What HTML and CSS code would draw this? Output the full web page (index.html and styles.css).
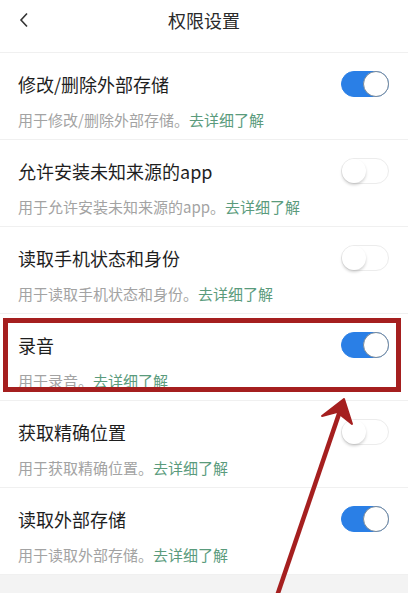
FILE: index.html
```html
<html lang="zh-CN">
<head>
    <meta charset="UTF-8">
    <meta name="viewport" content="width=device-width, initial-scale=1.0">
    <title>权限设置</title>
    <link rel="stylesheet" href="styles.css">
</head>
<body>
    <div class="page">
        <div class="header">
            <span class="back">
                <svg width="10" height="16" viewBox="0 0 10 16"><path d="M8 1.5 L2 8 L8 14.5" fill="none" stroke="#333" stroke-width="1.6"/></svg>
            </span>
            <span class="title">权限设置</span>
            <span></span>
        </div>
        <ul class="permlist">
            <li class="perm">
                <div class="permtop">
                    <span class="permname">修改/删除外部存储</span>
                    <span class="switch on"><span class="knob"></span></span>
                </div>
                <div class="permdesc">用于修改/删除外部存储。<span class="more">去详细了解</span></div>
            </li>
            <li class="perm">
                <div class="permtop">
                    <span class="permname">允许安装未知来源的app</span>
                    <span class="switch"><span class="knob"></span></span>
                </div>
                <div class="permdesc">用于允许安装未知来源的app。<span class="more">去详细了解</span></div>
            </li>
            <li class="perm">
                <div class="permtop">
                    <span class="permname">读取手机状态和身份</span>
                    <span class="switch"><span class="knob"></span></span>
                </div>
                <div class="permdesc">用于读取手机状态和身份。<span class="more">去详细了解</span></div>
            </li>
            <li class="perm">
                <div class="permtop">
                    <span class="permname">录音</span>
                    <span class="switch on"><span class="knob"></span></span>
                </div>
                <div class="permdesc">用于录音。<span class="more">去详细了解</span></div>
            </li>
            <li class="perm">
                <div class="permtop">
                    <span class="permname">获取精确位置</span>
                    <span class="switch"><span class="knob"></span></span>
                </div>
                <div class="permdesc">用于获取精确位置。<span class="more">去详细了解</span></div>
            </li>
            <li class="perm">
                <div class="permtop">
                    <span class="permname">读取外部存储</span>
                    <span class="switch on"><span class="knob"></span></span>
                </div>
                <div class="permdesc">用于读取外部存储。<span class="more">去详细了解</span></div>
            </li>
        </ul>
        <!-- annotation -->
        <div class="highlight"></div>
        <svg class="arrow" width="408" height="593" viewBox="0 0 408 593">
            <line x1="277" y1="596" x2="341" y2="408" stroke="#a51f1f" stroke-width="4.5"/>
            <path d="M344 399 L322 416 L337 412 L352 424 Z" fill="#a51f1f" stroke="#a51f1f" stroke-width="2" stroke-linejoin="round"/>
        </svg>
    </div>
</body>
</html>
```

FILE: styles.css
```css
body {
    margin: 0;
    background-color: #f3f3f3;
    font-family: "Noto Sans CJK SC", "Noto Sans", sans-serif;
}
.page {
    position: relative;
    width: 408px;
    height: 593px;
    overflow: hidden;
}
.header {
    display: grid;
    grid-template-columns: 1fr auto 1fr;
    align-items: start;
    height: 44px;
    padding-top: 8px;
    background-color: white;
    border-bottom: 1px solid #f0f0f0;
}
.back {
    padding-left: 19px;
    padding-top: 4px;
    height: 16px;
}
.title {
    font-size: 18px;
    line-height: 24px;
    color: #2a2a2a;
}
.permlist {
    list-style: none;
    margin: 0;
    padding: 0;
    background-color: white;
}
.perm {
    height: 86px;
    padding: 19px 19px 0 18px;
    box-sizing: border-box;
    height: 87px;
    border-bottom: 1px solid #f0f0f0;
}
.permtop {
    display: flex;
    justify-content: space-between;
    align-items: center;
    height: 24px;
}
.permname {
    font-size: 18px;
    line-height: 24px;
    color: #1e1e1e;
}
.permdesc {
    margin-top: 14px;
    font-size: 15px;
    line-height: 20px;
    color: #a3a3a3;
}
.more {
    color: #5a9b7c;
}
.switch {
    position: relative;
    width: 48px;
    height: 26px;
    border-radius: 13px;
    background-color: white;
    border: 1px solid #ececec;
    box-sizing: border-box;
}
.switch .knob {
    position: absolute;
    left: 0;
    top: 0;
    width: 24px;
    height: 24px;
    border-radius: 50%;
    background-color: white;
    box-shadow: 0 2px 3px rgba(0, 0, 0, 0.18);
}
.switch.on {
    background-color: #2a7fe6;
    border-color: #2a7fe6;
}
.switch.on .knob {
    left: auto;
    right: -1px;
    top: -1px;
    width: 26px;
    height: 26px;
    box-sizing: border-box;
    border: 1.5px solid #7a8a99;
    box-shadow: none;
}
.highlight {
    position: absolute;
    left: 3px;
    top: 318px;
    width: 398px;
    height: 74px;
    box-sizing: border-box;
    border: 5px solid #a51f1f;
}
.arrow {
    position: absolute;
    left: 0;
    top: 0;
}
```
